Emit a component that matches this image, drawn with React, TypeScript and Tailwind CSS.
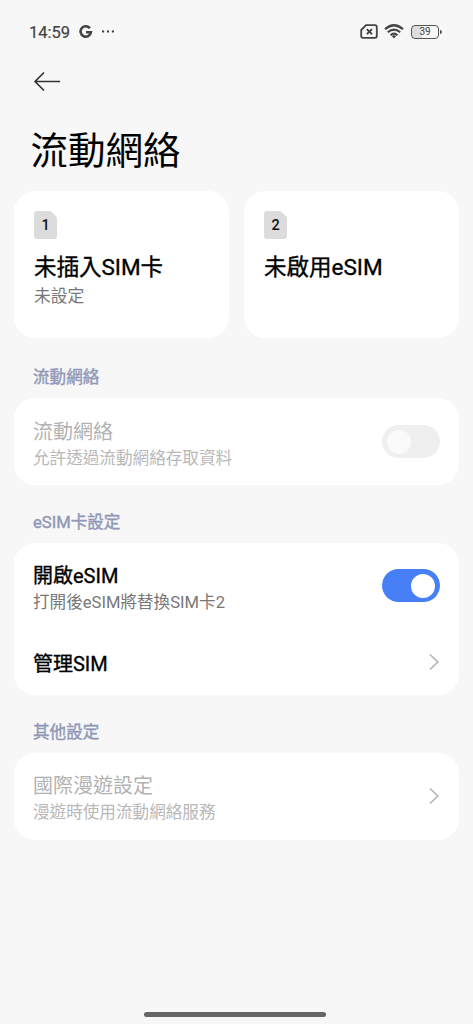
import { ReactNode } from "react";
import clsx from "clsx";

function StatusBar() {
  return (
    <div className="flex h-[62px] items-center justify-between pl-[29px] pr-[31px] text-[#444444]">
      <div className="flex items-center pt-[2px]">
        <span className="w-[50px] pt-px text-[16.5px] leading-5 [-webkit-text-stroke:0.2px_currentColor]">14:59</span>
        <svg width="14" height="15" viewBox="0 0 14 15" fill="none" stroke="currentColor" strokeWidth="2.6">
          <path d="M10.9 3.3A5.2 5.2 0 1 0 11.9 7.3H7" />
        </svg>
        <svg width="14" height="4" viewBox="0 0 14 4" className="ml-2" fill="currentColor">
          <circle cx="2.1" cy="1.5" r="1.15" />
          <circle cx="7" cy="1.5" r="1.15" />
          <circle cx="11.9" cy="1.5" r="1.15" />
        </svg>
      </div>
      <div className="flex items-center pt-px">
        <svg width="18" height="15" viewBox="0 0 18 15" fill="none" stroke="currentColor" strokeWidth="1.8">
          <path d="M6 1.2H15Q16.8 1.2 16.8 3V12Q16.8 13.8 15 13.8H3Q1.2 13.8 1.2 12V6Z" strokeLinejoin="round" />
          <path d="M6.8 5.1L12 10.1M12 5.1L6.8 10.1" strokeWidth="2" />
        </svg>
        <svg width="20" height="15" viewBox="0 0 20 15" className="ml-[6px]" fill="none" stroke="currentColor" strokeWidth="2.2">
          <path d="M1 5.2Q10-2.7 19 5.2" />
          <path d="M3.8 8.3Q10 2.8 16.2 8.3" />
          <path d="M6.6 11.2Q10 8.2 13.4 11.2" />
          <path d="M7.8 12Q10 10.4 12.2 12L10 14.4Z" fill="currentColor" stroke="none" />
        </svg>
        <div className="ml-[7px] flex h-[14px] w-[28px] items-center justify-center rounded-[4px] border-[1.5px] border-[#555555] bg-linear-to-r from-[#dddddd] from-39% to-[#f7f7f7] to-39% pt-px text-[10px] leading-none">
          39
        </div>
        <div className="mr-[0.5px] ml-px h-1 w-[1.5px] rounded-r bg-[#555555]" />
      </div>
    </div>
  );
}

function SimCard(props: { slot: number; title: string; status?: string }) {
  return (
    <div className="h-[147px] flex-1 rounded-[21px] bg-white pt-5 pl-5">
      <div className="grid h-7 w-[23px] text-[14.5px] leading-[29px] font-medium text-[#111111]">
        <svg width="23" height="28" viewBox="0 0 23 28" className="col-start-1 row-start-1" fill="#dcdcdc">
          <path d="M3 0H15.5Q16.8 0 17.7 .9L22 5.2Q23 6.2 23 7.5V25Q23 28 20 28H3Q0 28 0 25V3Q0 0 3 0Z" />
        </svg>
        <span className="col-start-1 row-start-1 text-center">{props.slot}</span>
      </div>
      <div className="mt-3 text-[22.5px] leading-8 text-black [-webkit-text-stroke:0.35px_currentColor]">
        {props.title}
      </div>
      {props.status && (
        <div className="text-[16.8px] leading-[26px] text-[#777777]">{props.status}</div>
      )}
    </div>
  );
}

function Toggle(props: { on: boolean }) {
  return (
    <div
      className={clsx(
        "flex h-[33px] w-[58px] items-center rounded-full px-[5px]",
        props.on ? "mb-px justify-end bg-[#477ff7]" : "bg-[#efefef]",
      )}
    >
      <div className={clsx("size-6 rounded-full", props.on ? "bg-white" : "bg-[#fafafa]")} />
    </div>
  );
}

function Chevron() {
  return (
    <svg width="12" height="18" viewBox="0 0 12 18" className="mb-px" fill="none" stroke="#b5b5b5" strokeWidth="1.7">
      <path d="M2 1.5L9.8 9L2 16.5" />
    </svg>
  );
}

function Row(props: { title: string; description?: string; disabled?: boolean; children: ReactNode }) {
  return (
    <div
      className={clsx(
        "flex items-center justify-between pr-[19px] pl-[19px]",
        props.description ? "h-[87px]" : "h-[65.5px]",
      )}
    >
      <div className={props.description ? "pt-[7px]" : "pt-[4px]"}>
        <div
          className={clsx(
            "text-[20px] leading-[27px]",
            props.disabled
              ? "text-[#b2b2b2]"
              : "text-black [-webkit-text-stroke:0.35px_currentColor]",
          )}
        >
          {props.title}
        </div>
        {props.description && (
          <div
            className={clsx(
              "text-[16.6px] leading-[26px]",
              props.disabled ? "text-[#b8b8b8]" : "text-[#777777]",
            )}
          >
            {props.description}
          </div>
        )}
      </div>
      {props.children}
    </div>
  );
}

function Section(props: { title: string; first?: boolean; children: ReactNode }) {
  return (
    <section>
      <h2
        className={clsx(
          "pl-[19px] text-[16.6px] leading-[42px] text-[#9299b8] [-webkit-text-stroke:0.45px_currentColor]",
          props.first ? "h-[60px] pt-[19px]" : "h-[57.5px] pt-[17px]",
        )}
      >
        {props.title}
      </h2>
      <div className="rounded-[21px] bg-white">{props.children}</div>
    </section>
  );
}

export default function App() {
  return (
    <div
      lang="zh-Hant"
      className="flex h-[1024px] w-[473px] flex-col overflow-hidden bg-[#f7f7f7] font-[Roboto,'Noto_Sans_CJK_TC',sans-serif]"
    >
      <StatusBar />
      <div className="flex h-[38px] items-center pl-[34px]">
        <svg width="27" height="20" viewBox="0 0 27 20" fill="none" stroke="#333333" strokeWidth="1.7" strokeLinecap="round" strokeLinejoin="round">
          <path d="M25.5 10.5H1M9.5 2L1 10.5L9.5 19" />
        </svg>
      </div>
      <h1 className="h-[91px] pl-[30.5px] text-[37.5px] leading-[102px] text-black">流動網絡</h1>
      <main className="px-[14px]">
        <div className="flex gap-[15px]">
          <SimCard slot={1} title="未插入SIM卡" status="未設定" />
          <SimCard slot={2} title="未啟用eSIM" />
        </div>
        <Section title="流動網絡" first>
          <Row title="流動網絡" description="允許透過流動網絡存取資料" disabled>
            <Toggle on={false} />
          </Row>
        </Section>
        <Section title="eSIM卡設定">
          <Row title="開啟eSIM" description="打開後eSIM將替換SIM卡2">
            <Toggle on />
          </Row>
          <Row title="管理SIM">
            <Chevron />
          </Row>
        </Section>
        <Section title="其他設定">
          <Row title="國際漫遊設定" description="漫遊時使用流動網絡服務" disabled>
            <Chevron />
          </Row>
        </Section>
      </main>
      <div className="mt-auto mb-[7px] ml-[144px] h-[5px] w-[182px] rounded-full bg-[#666666]" />
    </div>
  );
}
